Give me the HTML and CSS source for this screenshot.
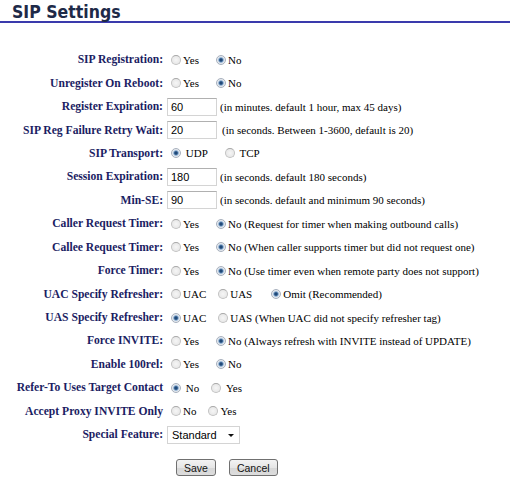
FILE: index.html
```html
<!DOCTYPE html>
<html lang="en">
<head>
    <meta charset="UTF-8">
    <meta name="viewport" content="width=device-width, initial-scale=1.0">
    <title>SIP Settings</title>
    <link rel="stylesheet" href="styles.css">
</head>
<body>
    <h1 class="page-title">SIP Settings</h1>

    <form class="settings-form">
        <div class="settings-grid">
            <div class="field-label">SIP Registration:</div>
            <div class="field">
                <label class="opt"><input type="radio" name="sip_reg"> Yes</label>
                <label class="opt"><input type="radio" name="sip_reg" checked> No</label>
            </div>

            <div class="field-label">Unregister On Reboot:</div>
            <div class="field">
                <label class="opt"><input type="radio" name="unreg_reboot"> Yes</label>
                <label class="opt"><input type="radio" name="unreg_reboot" checked> No</label>
            </div>

            <div class="field-label">Register Expiration:</div>
            <div class="field">
                <input type="text" class="text-input" value="60">
                <span class="hint">(in minutes. default 1 hour, max 45 days)</span>
            </div>

            <div class="field-label">SIP Reg Failure Retry Wait:</div>
            <div class="field">
                <input type="text" class="text-input" value="20">
                <span class="hint hint-wide">(in seconds. Between 1-3600, default is 20)</span>
            </div>

            <div class="field-label">SIP Transport:</div>
            <div class="field">
                <label class="opt"><input type="radio" name="transport" checked>&nbsp;UDP</label>
                <label class="opt"><input type="radio" name="transport">&nbsp;TCP</label>
            </div>

            <div class="field-label">Session Expiration:</div>
            <div class="field">
                <input type="text" class="text-input" value="180">
                <span class="hint">(in seconds. default 180 seconds)</span>
            </div>

            <div class="field-label">Min-SE:</div>
            <div class="field">
                <input type="text" class="text-input" value="90">
                <span class="hint">(in seconds. default and minimum 90 seconds)</span>
            </div>

            <div class="field-label">Caller Request Timer:</div>
            <div class="field">
                <label class="opt"><input type="radio" name="caller_timer"> Yes</label>
                <label class="opt"><input type="radio" name="caller_timer" checked> No (Request for timer when making outbound calls)</label>
            </div>

            <div class="field-label">Callee Request Timer:</div>
            <div class="field">
                <label class="opt"><input type="radio" name="callee_timer"> Yes</label>
                <label class="opt"><input type="radio" name="callee_timer" checked> No (When caller supports timer but did not request one)</label>
            </div>

            <div class="field-label">Force Timer:</div>
            <div class="field">
                <label class="opt"><input type="radio" name="force_timer"> Yes</label>
                <label class="opt"><input type="radio" name="force_timer" checked> No (Use timer even when remote party does not support)</label>
            </div>

            <div class="field-label">UAC Specify Refresher:</div>
            <div class="field tight">
                <label class="opt"><input type="radio" name="uac_refresher"> UAC</label>
                <label class="opt opt-wide"><input type="radio" name="uac_refresher"> UAS</label>
                <label class="opt"><input type="radio" name="uac_refresher" checked> Omit (Recommended)</label>
            </div>

            <div class="field-label">UAS Specify Refresher:</div>
            <div class="field tight">
                <label class="opt"><input type="radio" name="uas_refresher" checked> UAC</label>
                <label class="opt"><input type="radio" name="uas_refresher"> UAS (When UAC did not specify refresher tag)</label>
            </div>

            <div class="field-label">Force INVITE:</div>
            <div class="field">
                <label class="opt"><input type="radio" name="force_invite"> Yes</label>
                <label class="opt"><input type="radio" name="force_invite" checked> No (Always refresh with INVITE instead of UPDATE)</label>
            </div>

            <div class="field-label">Enable 100rel:</div>
            <div class="field">
                <label class="opt"><input type="radio" name="rel100"> Yes</label>
                <label class="opt"><input type="radio" name="rel100" checked> No</label>
            </div>

            <div class="field-label">Refer-To Uses Target Contact</div>
            <div class="field tight">
                <label class="opt"><input type="radio" name="refer_to" checked>&nbsp;No</label>
                <label class="opt"><input type="radio" name="refer_to">&nbsp;Yes</label>
            </div>

            <div class="field-label">Accept Proxy INVITE Only</div>
            <div class="field tight">
                <label class="opt"><input type="radio" name="proxy_only"> No</label>
                <label class="opt"><input type="radio" name="proxy_only"> Yes</label>
            </div>

            <div class="field-label">Special Feature:</div>
            <div class="field">
                <span class="select-wrap">
                    <select class="select-input">
                        <option selected>Standard</option>
                        <option>Broadsoft</option>
                        <option>Sonus</option>
                    </select>
                </span>
            </div>
        </div>

        <div class="form-actions">
            <button type="submit" class="btn">Save</button>
            <button type="button" class="btn">Cancel</button>
        </div>
    </form>
</body>
</html>
```

FILE: styles.css
```css
* {
    margin: 0;
    padding: 0;
    box-sizing: border-box;
}

body {
    font-family: "Liberation Serif", "Times New Roman", serif;
    font-size: 11px;
    color: #000;
    background: #fff;
}

.page-title {
    font-family: "DejaVu Sans Condensed", "DejaVu Sans", sans-serif;
    font-stretch: condensed;
    font-size: 17.5px;
    font-weight: 700;
    line-height: 17px;
    color: #1e2a48;
    padding: 4px 0 0 12px;
    height: 23px;
    border-bottom: 2px solid #3a3aac;
}

.settings-grid {
    display: grid;
    grid-template-columns: 163px auto;
    grid-auto-rows: 23.44px;
    column-gap: 4px;
    align-items: center;
    margin-top: 25px;
}

.field-label {
    text-align: right;
    font-weight: 700;
    font-size: 11.6px;
    color: #1b1d63;
    white-space: nowrap;
}

.field {
    display: flex;
    align-items: center;
    white-space: nowrap;
}

/* radio + caption */
.opt {
    display: inline-flex;
    align-items: center;
    margin-right: 13px;
}

.field.tight .opt {
    margin-right: 8px;
}

.field.tight .opt.opt-wide {
    margin-right: 15px;
}

.opt input[type="radio"] {
    appearance: none;
    -webkit-appearance: none;
    width: 10px;
    height: 10px;
    margin: 0 2px 0 4px;
    border: 1px solid #c2c2c2;
    border-top-color: #a8a8a8;
    border-radius: 50%;
    background: radial-gradient(circle, #f6f6f6 0, #e2e2e2 100%);
}

.opt input[type="radio"]:checked {
    border-color: #a7b0bd;
    background: radial-gradient(circle, #173a63 0, #2b5789 1.4px, #8fb0d2 2.4px, #e3e8ee 3.2px, #efefef 100%);
}

.text-input {
    width: 50px;
    height: 18px;
    padding: 0 3px;
    border: 1px solid #d4d4d4;
    border-top-color: #b0b0b0;
    font-family: "Liberation Sans", Arial, sans-serif;
    font-size: 11px;
    color: #000;
}

.hint {
    margin-left: 3px;
}

.hint-wide {
    margin-left: 5px;
}

.select-wrap {
    position: relative;
    display: inline-block;
}

.select-input {
    appearance: none;
    -webkit-appearance: none;
    width: 73px;
    height: 18px;
    padding: 0 4px;
    border: 1px solid #d4d4d4;
    background: #fff;
    font-family: "Liberation Sans", Arial, sans-serif;
    font-size: 11px;
    color: #000;
}

/* little dropdown arrow */
.select-wrap::after {
    content: "";
    position: absolute;
    right: 6px;
    top: 8px;
    border-left: 3px solid transparent;
    border-right: 3px solid transparent;
    border-top: 3px solid #111;
}

.form-actions {
    display: flex;
    gap: 13px;
    padding-left: 176px;
    margin-top: 13px;
}

.btn {
    height: 17px;
    padding: 0 7px;
    border: 1px solid #707070;
    border-radius: 3px;
    background: linear-gradient(#f3f3f3, #e6e6e6 50%, #d6d6d6 51%, #dddddd);
    font-family: "Liberation Sans", Arial, sans-serif;
    font-size: 10.5px;
    color: #111;
    cursor: pointer;
}
```
